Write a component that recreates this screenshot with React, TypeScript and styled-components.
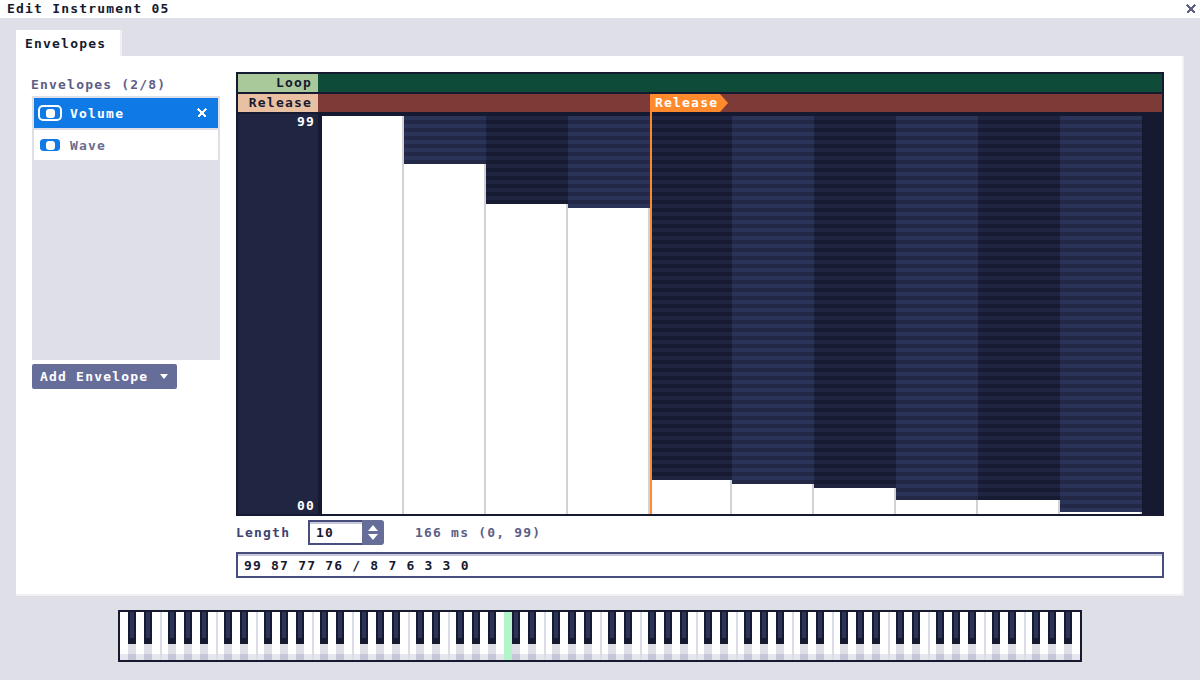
import React from "react";
import styled, { createGlobalStyle } from "styled-components";

const NAVY = "#161a30";
const MUTED = "#5c5e86";
const LAV = "#dfdfe8";
const ORANGE = "#ff8a2e";
const BTN = "#676d99";
const EDGE = "#474d7d";

const Global = createGlobalStyle`
  html, body { margin: 0; padding: 0; background: ${LAV}; }
  body {
    font-family: "DejaVu Sans Mono", "Liberation Mono", monospace;
    font-weight: 700;
    font-size: 13px;
    letter-spacing: 1.2px;
    color: ${NAVY};
  }
  * { box-sizing: border-box; }
`;

const Page = styled.div`
  width: 1200px;
  height: 680px;
  display: flex;
  flex-direction: column;
  overflow: hidden;
`;

const TitleBar = styled.div`
  height: 18px;
  flex: none;
  background: #fff;
  display: flex;
  align-items: center;
  justify-content: space-between;
  padding: 0 4px 0 7px;
  line-height: 18px;
`;

const Body = styled.div`
  display: flex;
  flex-direction: column;
  padding: 12px 16px 0;
`;

const TabRow = styled.div`
  display: flex;
  height: 26px;
`;

const Tab = styled.div`
  width: 106px;
  height: 26px;
  background: #fff;
  padding-left: 9px;
  display: flex;
  align-items: center;
  box-shadow: inset -2px 0 0 #f0f0f5;
`;

const Panel = styled.div`
  width: 1168px;
  height: 540px;
  background: #fff;
  padding: 16px 20px 0 16px;
  display: flex;
  gap: 16px;
  box-shadow: inset -2px -2px 0 #f0f0f5;
`;

const Side = styled.div`
  width: 188px;
  display: flex;
  flex-direction: column;
`;

const SideLabel = styled.div`
  height: 24px;
  color: ${MUTED};
  display: flex;
  align-items: center;
  margin-left: -1px;
`;

const List = styled.div`
  height: 264px;
  background: ${LAV};
  padding: 2px;
  display: flex;
  flex-direction: column;
  gap: 2px;
`;

const Item = styled.div<{ $sel?: boolean }>`
  height: 30px;
  display: flex;
  align-items: center;
  gap: 8px;
  padding-left: 4px;
  background: ${(p) => (p.$sel ? "#0f7ae6" : "#fff")};
  color: ${(p) => (p.$sel ? "#fff" : "#6a6c90")};
`;

const Toggle = styled.div<{ $ring: string }>`
  width: 24px;
  height: 16px;
  border: 2px solid ${(p) => p.$ring};
  border-radius: 5px;
  background: #0f7ae6;
  background-clip: padding-box;
  display: flex;
  align-items: center;
  justify-content: center;
  &::after {
    content: "";
    width: 9px;
    height: 9px;
    border-radius: 3px;
    background: #fff;
  }
`;

const RemoveIcon = styled.svg`
  margin-left: auto;
  margin-right: 11px;
`;

const AddButton = styled.div`
  margin-top: 4px;
  width: 145px;
  height: 25px;
  background: ${BTN};
  color: #fff;
  border-radius: 2px;
  display: flex;
  align-items: center;
  gap: 12px;
  padding-left: 8px;
`;

const Main = styled.div`
  width: 928px;
  display: flex;
  flex-direction: column;
`;

const Graph = styled.div`
  height: 444px;
  background: ${NAVY};
  padding: 2px;
  display: flex;
  flex-direction: column;
  gap: 2px;
`;

const MarkerRow = styled.div`
  height: 18px;
  display: flex;
`;

const MarkerLabel = styled.div<{ $bg: string }>`
  width: 80px;
  background: ${(p) => p.$bg};
  text-align: right;
  padding-right: 6px;
  line-height: 18px;
`;

const MarkerTrack = styled.div<{ $bg: string }>`
  flex: 1;
  position: relative;
  background: ${(p) => p.$bg};
`;

const Flag = styled.div`
  position: absolute;
  left: 332px;
  top: 0;
  width: 78px;
  height: 18px;
  background: ${ORANGE};
  color: #fff;
  padding-left: 5px;
  line-height: 18px;
  clip-path: polygon(0 0, 70px 0, 78px 9px, 70px 18px, 0 18px);
`;

const PlotRow = styled.div`
  height: 400px;
  display: flex;
  gap: 4px;
`;

const Axis = styled.div`
  width: 80px;
  background: #202541;
  color: #fff;
  display: flex;
  flex-direction: column;
  justify-content: space-between;
  align-items: flex-end;
  padding: 1px 3px 2px 0;
  line-height: 13px;
`;

const Plot = styled.div`
  flex: 1;
  position: relative;
  display: flex;
  padding-top: 2px;
  background: ${NAVY};
`;

const Column = styled.div<{ $alt: boolean }>`
  width: 82px;
  display: flex;
  flex-direction: column;
  justify-content: flex-end;
  background: ${(p) =>
    p.$alt
      ? "repeating-linear-gradient(to bottom, #2a3358 0 4px, #222846 4px 8px)"
      : "repeating-linear-gradient(to bottom, #1f2441 0 4px, #171b31 4px 8px)"};
`;

const Bar = styled.div`
  background: #fff;
  border-right: 2px solid #d2d2d6;
`;

const ReleaseLine = styled.div`
  position: absolute;
  left: 328px;
  top: -2px;
  bottom: 0;
  width: 2px;
  background: ${ORANGE};
`;

const Controls = styled.div`
  margin-top: 4px;
  height: 25px;
  display: flex;
  align-items: center;
`;

const FieldLabel = styled.span`
  width: 72px;
  color: #3e4270;
`;

const NumberBox = styled.div`
  display: flex;
  width: 76px;
  height: 25px;
`;

const NumberField = styled.div`
  flex: 1;
  border: 2px solid ${EDGE};
  border-right: none;
  box-shadow: inset 0 2px 0 #c8cadc;
  padding-left: 6px;
  display: flex;
  align-items: center;
`;

const Spinner = styled.div`
  width: 22px;
  background: ${BTN};
  border-radius: 0 3px 3px 0;
  display: flex;
  flex-direction: column;
  align-items: center;
  justify-content: center;
  gap: 3px;
`;

const Info = styled.span`
  margin-left: 31px;
  color: ${MUTED};
`;

const SeqInput = styled.div`
  margin-top: 7px;
  height: 26px;
  border: 2px solid ${EDGE};
  box-shadow: inset 0 2px 0 #c8cadc;
  padding-left: 6px;
  display: flex;
  align-items: center;
`;

const Piano = styled.div`
  margin: 14px auto 0;
  width: 964px;
  height: 52px;
  border: 2px solid ${NAVY};
  display: flex;
  background: #fff;
`;

const Key = styled.div<{ $black: boolean; $sep: boolean; $active: boolean }>`
  width: 8px;
  height: 48px;
  position: relative;
  background: ${(p) =>
    p.$active
      ? "#b3f5c8"
      : p.$black
      ? `linear-gradient(to bottom, ${NAVY} 0 32px, #dfdfe8 32px 42px, #c6c6d8 42px 48px)`
      : "linear-gradient(to bottom, #fff 0 42px, #e6e6ee 42px 48px)"};
  box-shadow: ${(p) => (p.$sep && !p.$active ? "inset 2px 0 0 #dcdce6" : "none")};
  &::before {
    content: "";
    display: ${(p) => (p.$black && !p.$active ? "block" : "none")};
    position: absolute;
    left: 2px;
    top: 0;
    width: 4px;
    height: 26px;
    background: #2a3358;
  }
`;

const values = [99, 87, 77, 76, 8, 7, 6, 3, 3, 0];
const BLACK = [1, 3, 6, 8, 10];

function XIcon({ color }: { color: string }) {
  return (
    <svg width="10" height="10" viewBox="0 0 10 10" shapeRendering="crispEdges">
      <path d="M1 1L9 9M9 1L1 9" stroke={color} strokeWidth="2" />
    </svg>
  );
}

export default function App() {
  const keys = Array.from({ length: 120 }, (_, i) => {
    const n = i % 12;
    return {
      black: BLACK.includes(n),
      sep: i > 0 && (n === 0 || n === 5),
      active: i === 48,
    };
  });

  return (
    <Page>
      <Global />
      <TitleBar>
        <span>Edit Instrument 05</span>
        <XIcon color={MUTED} />
      </TitleBar>
      <Body>
        <TabRow>
          <Tab>Envelopes</Tab>
        </TabRow>
        <Panel>
          <Side>
            <SideLabel>Envelopes (2/8)</SideLabel>
            <List>
              <Item $sel>
                <Toggle $ring="#fff" />
                <span>Volume</span>
                <RemoveIcon as="span">
                  <XIcon color="#fff" />
                </RemoveIcon>
              </Item>
              <Item>
                <Toggle $ring="#fff" />
                <span>Wave</span>
              </Item>
            </List>
            <AddButton>
              <span>Add Envelope</span>
              <svg width="8" height="5" viewBox="0 0 8 5">
                <path d="M0 0H8L4 5Z" fill="#fff" />
              </svg>
            </AddButton>
          </Side>
          <Main>
            <Graph>
              <MarkerRow>
                <MarkerLabel $bg="#a9c99b">Loop</MarkerLabel>
                <MarkerTrack $bg="#0f4b39" />
              </MarkerRow>
              <MarkerRow>
                <MarkerLabel $bg="#e9c0a1">Release</MarkerLabel>
                <MarkerTrack $bg="#7d3a36">
                  <Flag>Release</Flag>
                </MarkerTrack>
              </MarkerRow>
              <PlotRow>
                <Axis>
                  <span>99</span>
                  <span>00</span>
                </Axis>
                <Plot>
                  {values.map((v, i) => (
                    <Column key={i} $alt={i % 2 === 1}>
                      <Bar style={{ height: 2 + v * 4 }} />
                    </Column>
                  ))}
                  <ReleaseLine />
                </Plot>
              </PlotRow>
            </Graph>
            <Controls>
              <FieldLabel>Length</FieldLabel>
              <NumberBox>
                <NumberField>10</NumberField>
                <Spinner>
                  <svg width="10" height="6" viewBox="0 0 10 6">
                    <path d="M5 0L10 6H0Z" fill="#fff" />
                  </svg>
                  <svg width="10" height="6" viewBox="0 0 10 6">
                    <path d="M0 0H10L5 6Z" fill="#fff" />
                  </svg>
                </Spinner>
              </NumberBox>
              <Info>166 ms (0, 99)</Info>
            </Controls>
            <SeqInput>99 87 77 76 / 8 7 6 3 3 0</SeqInput>
          </Main>
        </Panel>
      </Body>
      <Piano>
        {keys.map((k, i) => (
          <Key key={i} $black={k.black} $sep={k.sep} $active={k.active} />
        ))}
      </Piano>
    </Page>
  );
}
